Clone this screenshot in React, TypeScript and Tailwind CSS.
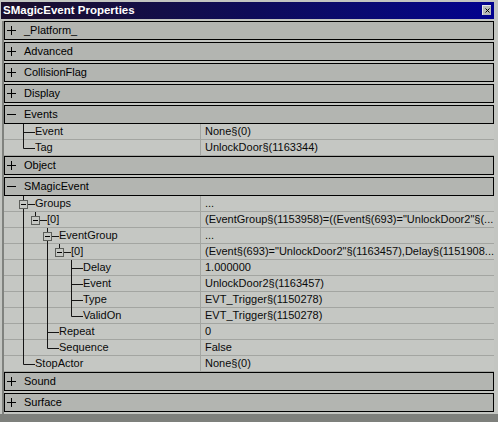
import React from 'react';

type Prop = { name: string; value?: string; children?: Prop[] };
type Category = { name: string; props?: Prop[] };

type Row = {
  name: string;
  value: string;
  depth: number;
  hasKids: boolean;
  last: boolean;
  lines: boolean[];
};

const categories: Category[] = [
  { name: '_Platform_' },
  { name: 'Advanced' },
  { name: 'CollisionFlag' },
  { name: 'Display' },
  {
    name: 'Events',
    props: [
      { name: 'Event', value: 'None§(0)' },
      { name: 'Tag', value: 'UnlockDoor§(1163344)' },
    ],
  },
  { name: 'Object' },
  {
    name: 'SMagicEvent',
    props: [
      {
        name: 'Groups',
        value: '...',
        children: [
          {
            name: '[0]',
            value: '(EventGroup§(1153958)=((Event§(693)="UnlockDoor2"§(...',
            children: [
              {
                name: 'EventGroup',
                value: '...',
                children: [
                  {
                    name: '[0]',
                    value: '(Event§(693)="UnlockDoor2"§(1163457),Delay§(1151908...',
                    children: [
                      { name: 'Delay', value: '1.000000' },
                      { name: 'Event', value: 'UnlockDoor2§(1163457)' },
                      { name: 'Type', value: 'EVT_Trigger§(1150278)' },
                      { name: 'ValidOn', value: 'EVT_Trigger§(1150278)' },
                    ],
                  },
                ],
              },
              { name: 'Repeat', value: '0' },
              { name: 'Sequence', value: 'False' },
            ],
          },
        ],
      },
      { name: 'StopActor', value: 'None§(0)' },
    ],
  },
  { name: 'Sound' },
  { name: 'Surface' },
];

function flatten(items: Prop[], depth: number, lines: boolean[], out: Row[]) {
  items.forEach((p, i) => {
    const last = i === items.length - 1;
    out.push({ name: p.name, value: p.value ?? '', depth, hasKids: !!p.children, last, lines });
    if (p.children) flatten(p.children, depth + 1, [...lines, !last], out);
  });
  return out;
}

const TreeLines = ({ row }: { row: Row }) => {
  const w = 31 + 12 * (row.depth - 1);
  const x = (k: number) => 19.5 + 12 * (k - 1);
  const xv = x(row.depth);
  return (
    <svg width={w} height={15} className="shrink-0 overflow-visible">
      {row.lines.map((on, i) =>
        on ? <line key={i} x1={x(i + 1)} y1={0} x2={x(i + 1)} y2={16} stroke="#151515" /> : null
      )}
      <line x1={xv} y1={0} x2={xv} y2={row.last ? 8.5 : 16} stroke="#151515" />
      <line x1={xv} y1={8.5} x2={w} y2={8.5} stroke="#151515" />
      {row.hasKids && (
        <>
          <rect x={xv - 4} y={4.5} width={8} height={8} fill="#c5c7c3" stroke="#5c5e5a" />
          <line x1={xv - 2.5} y1={8.5} x2={xv + 2.5} y2={8.5} stroke="#000" />
        </>
      )}
    </svg>
  );
};

const Sign = ({ open }: { open: boolean }) => (
  <svg width={11} height={11} className="shrink-0">
    <line x1={1} y1={5.5} x2={10} y2={5.5} stroke="#000" />
    {!open && <line x1={5.5} y1={1} x2={5.5} y2={10} stroke="#000" />}
  </svg>
);

const Header = ({ name, open }: { name: string; open: boolean }) => (
  <div className={`h-[19px] border border-black bg-[#b3b5b1] flex items-center ${open ? '' : 'mb-[2px]'}`}>
    <div className="ml-[1px]">
      <Sign open={open} />
    </div>
    <span className="ml-[7px] text-black leading-none">{name}</span>
  </div>
);

const PropRow = ({ row }: { row: Row }) => (
  <div className="h-[16px] flex border-b border-[#a3a5a1] bg-[#c5c7c3]">
    <div className="w-[197px] shrink-0 flex items-center border-r border-[#a3a5a1]">
      <TreeLines row={row} />
      <span className="leading-none whitespace-nowrap">{row.name}</span>
    </div>
    <div className="flex-1 min-w-0 pl-[4px] flex items-center overflow-hidden">
      <span className="leading-none whitespace-nowrap">{row.value}</span>
    </div>
  </div>
);

export default function App() {
  return (
    <div className="w-[498px] h-[422px] bg-[#c3c5c1] flex flex-col pt-[2px] font-['Liberation_Sans',Arial,sans-serif] text-[11px] text-[#0a0a0a] overflow-hidden">
      {/* title bar */}
      <div className="h-[18px] ml-[1px] mr-[4px] flex items-center bg-linear-to-r from-[#1b0d2b] via-[#0e0b58] to-[#02028f]">
        <span className="ml-[2px] text-white font-bold text-[11.5px] leading-none">SMagicEvent Properties</span>
        <div className="ml-auto mr-[3px] w-[9px] h-[10px] bg-[#b9bbb7] border-t border-l border-[#e8e8e8] border-r-[#404040] border-b-[#404040] flex items-center justify-center">
          <svg width={5} height={5}>
            <path d="M0.5 0.5 L4.5 4.5 M4.5 0.5 L0.5 4.5" stroke="#000" strokeWidth={1} />
          </svg>
        </div>
      </div>

      <div className="flex flex-1 pt-[2px]">
        <div className="ml-[2px] border-l-2 border-[#80827e] flex-1 flex flex-col pr-[3px] mr-[4px]">
          <div className="flex flex-col">
            {categories.map((c) => {
              const open = !!c.props;
              const rows = c.props ? flatten(c.props, 1, [], []) : [];
              return (
                <div key={c.name} className="flex flex-col">
                  <Header name={c.name} open={open} />
                  {rows.map((r, i) => (
                    <PropRow key={i} row={r} />
                  ))}
                </div>
              );
            })}
          </div>
          <div className="flex-1" />
        </div>
      </div>
      <div className="h-[9px] bg-[#7e807c]" />
    </div>
  );
}
